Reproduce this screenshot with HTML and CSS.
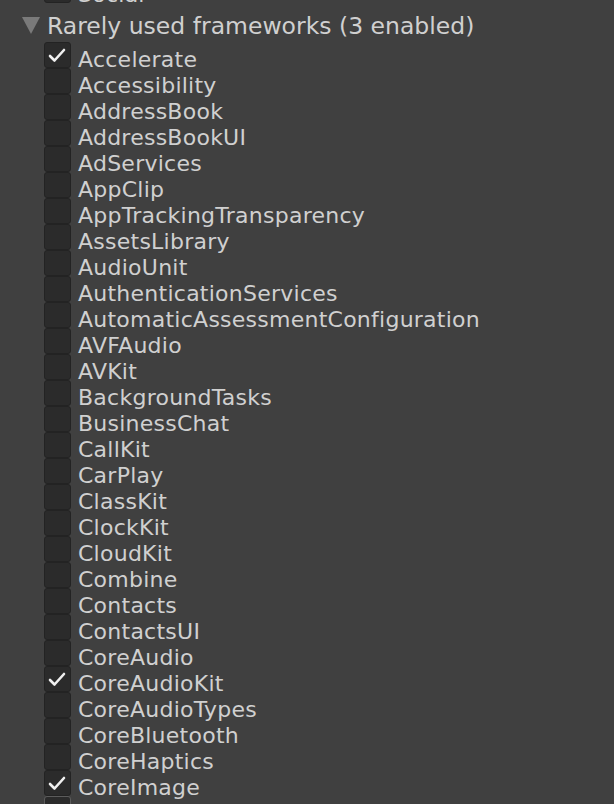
FILE: index.html
```html
<!DOCTYPE html>
<html lang="en">
<head>
    <meta charset="UTF-8">
    <meta name="viewport" content="width=device-width, initial-scale=1.0">
    <title>Frameworks</title>
    <link rel="stylesheet" href="styles.css">
</head>
<body>
    <div class="panel">
        <div class="row cut">
            <span class="box"></span>
            <span class="label">Social</span>
        </div>

        <div class="group-header">
            <span class="arrow"></span>
            <span class="group-title">Rarely used frameworks (3 enabled)</span>
        </div>

        <div id="list" class="list"></div>
    </div>

    <script>
        document.addEventListener('DOMContentLoaded', function() {
            const list = document.getElementById('list');
            const names = [
                'Accelerate', 'Accessibility', 'AddressBook', 'AddressBookUI', 'AdServices',
                'AppClip', 'AppTrackingTransparency', 'AssetsLibrary', 'AudioUnit',
                'AuthenticationServices', 'AutomaticAssessmentConfiguration', 'AVFAudio',
                'AVKit', 'BackgroundTasks', 'BusinessChat', 'CallKit', 'CarPlay', 'ClassKit',
                'ClockKit', 'CloudKit', 'Combine', 'Contacts', 'ContactsUI', 'CoreAudio',
                'CoreAudioKit', 'CoreAudioTypes', 'CoreBluetooth', 'CoreHaptics', 'CoreImage',
                'CoreLocation'
            ];
            const checked = ['Accelerate', 'CoreAudioKit', 'CoreImage'];
            const tick = '<svg viewBox="0 0 27 26" width="27" height="26"><polyline points="6,14 10.5,18.5 20,8" fill="none" stroke="#f0f0f0" stroke-width="2.6" stroke-linecap="round" stroke-linejoin="round"/></svg>';

            names.forEach(function(name, i) {
                const row = document.createElement('div');
                row.className = 'row';
                const box = document.createElement('span');
                box.className = 'box';
                if (checked.includes(name)) box.innerHTML = tick;
                if (i === names.length - 1) box.classList.add('focus');
                const label = document.createElement('span');
                label.className = 'label';
                label.textContent = name;
                row.appendChild(box);
                row.appendChild(label);
                list.appendChild(row);
            });
        });
    </script>
</body>
</html>
```

FILE: styles.css
```css
html, body {
    margin: 0;
    padding: 0;
    background: #404040;
    overflow: hidden;
}
body {
    font-family: "DejaVu Sans", Verdana, sans-serif;
    font-size: 22px;
    color: #d0d0d0;
    height: 804px;
}
.panel {
    margin-top: -23px;
}
.row {
    display: flex;
    align-items: flex-start;
    height: 26px;
    padding-left: 44px;
}
.box {
    box-sizing: border-box;
    width: 27px;
    height: 26px;
    background: #2b2b2b;
    border: 1px solid #232323;
    border-radius: 3px;
    flex-shrink: 0;
}
.box svg {
    display: block;
    margin: -1px;
}
.box.focus {
    border-color: #5c5c5c;
}
.label {
    margin-left: 7px;
    line-height: 26px;
    padding-top: 5px;
    letter-spacing: 0.25px;
    white-space: nowrap;
}
.group-header {
    display: flex;
    align-items: center;
    height: 39px;
    padding-left: 22px;
}
.arrow {
    width: 0;
    height: 0;
    border-left: 9px solid transparent;
    border-right: 9px solid transparent;
    border-top: 17px solid #7a7a7a;
    margin-top: 5px;
}
.group-title {
    margin-left: 7px;
    font-size: 23.5px;
    line-height: 26px;
    padding-top: 6px;
    white-space: nowrap;
}
```
